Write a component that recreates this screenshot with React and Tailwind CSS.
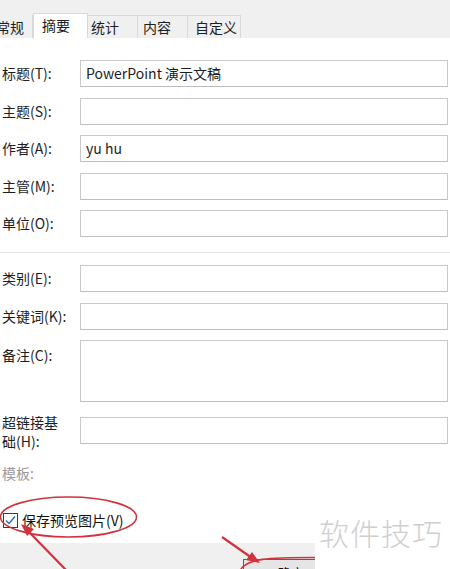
import React from "react";

function Row({ label, h = 27, value, mt, labelClass = "" }) {
  return (
    <div className="flex items-start" style={{ marginTop: mt }}>
      <div className={`w-[80px] shrink-0 pl-[2px] text-[14px] leading-[18px] text-[#1e1e1e] ${labelClass}`}>{label}</div>
      <div
        className="w-[368px] border border-[#c9c9c9] border-b-[#bdbdbd] bg-white pl-[5px] text-[14px] leading-[25px] text-[#1e1e1e]"
        style={{ height: h }}
      >
        {value}
      </div>
    </div>
  );
}

export default function App() {
  return (
    <div className="relative flex h-[569px] w-[450px] flex-col overflow-hidden bg-white font-['Noto_Sans_CJK_SC','Microsoft_YaHei',sans-serif]">
      {/* tab bar */}
      <div className="flex h-[38px] shrink-0 items-end bg-[#f0f0f0] text-[14px] text-[#1e1e1e]">
        <div className="ml-[-14px] flex h-[23px] w-[47px] items-center border-r border-[#d9d9d9] bg-[#f0f0f0] pl-[10px] leading-none">常规</div>
        <div className="flex h-[25px] w-[55px] items-center border-x border-t border-[#d9d9d9] bg-white pl-[8px] pb-[2px] leading-none">摘要</div>
        <div className="flex h-[23px] w-[50px] items-center border-r border-t border-[#d9d9d9] bg-[#f0f0f0] pl-[3px] leading-none">统计</div>
        <div className="flex h-[23px] w-[50px] items-center border-r border-t border-[#d9d9d9] bg-[#f0f0f0] pl-[5px] leading-none">内容</div>
        <div className="flex h-[23px] w-[53px] items-center border-r border-t border-[#d9d9d9] bg-[#f0f0f0] pl-[7px] leading-none">自定义</div>
      </div>

      {/* body */}
      <div className="flex flex-1 flex-col">
        <Row mt={22} label={<span className="block pt-[4px]">标题(T):</span>} value="PowerPoint 演示文稿" />
        <Row mt={10.5} label={<span className="block pt-[4px]">主题(S):</span>} />
        <Row mt={10.5} label={<span className="block pt-[4px]">作者(A):</span>} value="yu hu" />
        <Row mt={10.5} label={<span className="block pt-[4px]">主管(M):</span>} />
        <Row mt={10.5} label={<span className="block pt-[4px]">单位(O):</span>} />
        <div className="mt-[14.5px] h-px w-full bg-[#e3e3e3]" />
        <Row mt={12.5} label={<span className="block pt-[4px]">类别(E):</span>} />
        <Row mt={10.5} label={<span className="block pt-[4px]">关键词(K):</span>} />
        <Row mt={10.5} h={62} label={<span className="block pt-[6px]">备注(C):</span>} />
        <div className="mt-[15px] flex items-start">
          <div className="mt-[-4px] w-[80px] shrink-0 pl-[2px] text-[14px] leading-[19px] text-[#1e1e1e]">
            超链接基<br />础(H):
          </div>
          <div className="h-[27px] w-[368px] border border-[#c9c9c9] border-b-[#bdbdbd] bg-white" />
        </div>
        <div className="mt-[13px] pl-[2px] text-[14px] leading-[18px] text-[#9a9a9a]">模板:</div>
        <div className="mt-[28px] flex h-[20px] items-center pl-[3px]">
          <svg width="15" height="15" viewBox="0 0 15 15" className="shrink-0">
            <rect x="0.5" y="0.5" width="14" height="14" fill="#fff" stroke="#3c3c3c" />
            <path d="M3 7.5 L6 10.5 L12 3.5" fill="none" stroke="#2b6cb0" strokeWidth="1.4" />
          </svg>
          <span className="ml-[4px] text-[14px] leading-none text-[#111]">保存预览图片(V)</span>
        </div>
      </div>

      {/* bottom bar */}
      <div className="flex h-[26px] shrink-0">
        <div className="h-full w-[315px] bg-[#f0f0f0] pl-[243px] pt-[16px]">
          <div className="h-[24px] w-[80px] border border-[#0078d7] bg-[#e5e5e5] pl-[34px] pt-[6px] text-[13px] leading-none text-[#111]">确定</div>
        </div>
        <div className="h-full flex-1 bg-white" />
      </div>

      {/* watermark */}
      <div className="absolute left-[319px] top-[512px] text-[30px] leading-[40px] font-light tracking-[1px] text-[#cfcfcf]">软件技巧</div>

      {/* annotations */}
      <svg className="pointer-events-none absolute inset-0" width="450" height="569" viewBox="0 0 450 569">
        <ellipse cx="68.5" cy="517" rx="68" ry="20" fill="none" stroke="#d2323c" strokeWidth="1.6" />
        <path d="M240 571 C 245 558, 270 557.5, 315 557.5" fill="none" stroke="#d2323c" strokeWidth="1.6" />
        <line x1="68" y1="572" x2="28" y2="531" stroke="#d2323c" strokeWidth="2.2" />
        <polygon points="21,524 34,529 27,536" fill="#d2323c" />
        <line x1="222" y1="537" x2="252" y2="558" stroke="#d2323c" strokeWidth="2.2" />
        <polygon points="260,563 246,560 252,552" fill="#d2323c" />
      </svg>
    </div>
  );
}
